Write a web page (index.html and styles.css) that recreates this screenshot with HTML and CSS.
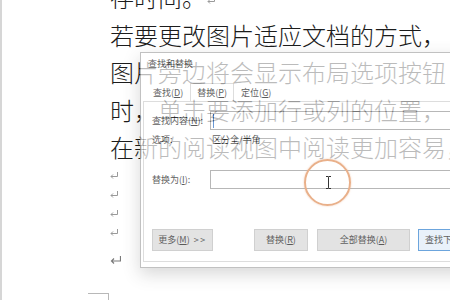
FILE: index.html
```html
<!DOCTYPE html>
<html lang="zh-CN">
<head>
<meta charset="utf-8">
<link rel="stylesheet" href="styles.css">
</head>
<body>
<div class="page">
  <div class="doc">
    <p class="line">存时间。<svg class="pm-inline" width="8" height="7" viewBox="0 0 8 7"><path d="M7.5 0 V4.5 H1 M3 2.5 L1 4.5 L3 6.5" fill="none" stroke="#9a9a9a"/></svg></p>
    <p class="line">若要更改图片适应文档的方式，</p>
    <p class="line">图片旁边将会显示布局选项按钮</p>
    <p class="line">时，单击要添加行或列的位置，</p>
    <p class="line">在新的阅读视图中阅读更加容易，</p>
    <div class="mark-s"><svg width="8" height="7" viewBox="0 0 8 7"><path d="M7.5 0 V4.5 H1 M3 2.5 L1 4.5 L3 6.5" fill="none" stroke="#9a9a9a"/></svg></div>
    <div class="mark-s"><svg width="8" height="7" viewBox="0 0 8 7"><path d="M7.5 0 V4.5 H1 M3 2.5 L1 4.5 L3 6.5" fill="none" stroke="#9a9a9a"/></svg></div>
    <div class="mark-s"><svg width="8" height="7" viewBox="0 0 8 7"><path d="M7.5 0 V4.5 H1 M3 2.5 L1 4.5 L3 6.5" fill="none" stroke="#9a9a9a"/></svg></div>
    <div class="mark-s"><svg width="8" height="7" viewBox="0 0 8 7"><path d="M7.5 0 V4.5 H1 M3 2.5 L1 4.5 L3 6.5" fill="none" stroke="#9a9a9a"/></svg></div>
    <div class="mark-l"><svg width="11" height="8" viewBox="0 0 11 8"><path d="M10.5 0 V5 H1.5 M4 2.5 L1.5 5 L4 7.5" fill="none" stroke="#7a7a7a" stroke-width="1.2"/></svg></div>
    <div class="corner"></div>
  </div>

  <div class="dialog">
    <div class="dlg-title">查找和替换</div>
    <div class="tabs">
      <span class="tab">查找(<u>D</u>)</span>
      <span class="tab active">替换(<u>P</u>)</span>
      <span class="tab">定位(<u>G</u>)</span>
    </div>
    <div class="panel">
      <div class="row">
        <span class="label">查找内容(<u>N</u>):</span>
        <div class="input"><span class="caret"></span></div>
      </div>
      <div class="row">
        <span class="label">选项:</span>
        <span class="val">区分全/半角</span>
      </div>
      <div class="row repl">
        <span class="label">替换为(<u>I</u>):</span>
        <div class="input"></div>
      </div>
      <div class="btns">
        <span class="btn more">更多(<u>M</u>) <span class="arrows">&gt;&gt;</span></span>
        <span class="btn replace">替换(<u>R</u>)</span>
        <span class="btn all">全部替换(<u>A</u>)</span>
        <span class="btn next">查找下一处(<u>F</u>)</span>
      </div>
    </div>
  </div>

  <div class="ring"></div>
  <svg class="ibeam" width="7" height="13" viewBox="0 0 7 13"><path d="M1 0.5 H3 Q3.5 0.5 3.5 1.5 V11.5 Q3.5 12.5 3 12.5 H1 M6 0.5 H4 Q3.5 0.5 3.5 1.5 M3.5 11.5 Q3.5 12.5 4 12.5 H6" fill="none" stroke="#333" stroke-width="1"/></svg>
</div>
</body>
</html>
```

FILE: styles.css
```css
html, body {
  margin: 0;
  padding: 0;
  background: #fff;
}

.page {
  position: relative;
  width: 450px;
  height: 300px;
  overflow: hidden;
  box-sizing: border-box;
  border-left: 2px solid #d6d6d6;
  background: #fff;
}

.doc {
  margin-top: -22px;
  padding-left: 108px;
  font-family: "Noto Sans CJK SC", "Noto Sans", sans-serif;
}

.line {
  margin: 0;
  height: 37.5px;
  line-height: 37.5px;
  font-size: 24px;
  font-weight: 300;
  color: #1c1c1c;
  white-space: nowrap;
}

.pm-inline {
  vertical-align: middle;
  margin-left: 1px;
}

.mark-s {
  height: 19px;
  display: flex;
  align-items: center;
}

.mark-l {
  height: 37px;
  display: flex;
  align-items: center;
}

.corner {
  margin-top: 14.5px;
  margin-left: -22px;
  width: 20px;
  height: 12px;
  border-top: 1px solid #b8b8b8;
  border-right: 1px solid #b8b8b8;
}

/* dialog */
.dialog {
  position: absolute;
  left: 138px;
  top: 52px;
  width: 330px;
  height: 216px;
  box-sizing: border-box;
  border: 1px solid #a8a8a8;
  background: #fff;
  box-shadow: 0 6px 16px rgba(0, 0, 0, 0.22);
  opacity: 0.7;
  padding-bottom: 5px;
  font-family: "Noto Sans CJK SC", "Noto Sans", sans-serif;
  font-size: 9px;
  color: #151515;
}

.dlg-title {
  height: 22px;
  line-height: 22px;
  padding-left: 7px;
}

.tabs {
  display: flex;
  padding-top: 8px;
  padding-left: 5px;
  height: 18px;
}

.tab {
  box-sizing: border-box;
  height: 18px;
  line-height: 18px;
  padding: 0 6px;
  border: 1px solid transparent;
  border-bottom: none;
}

.tab.active {
  border-color: #cfcfcf;
  background: #fff;
}

.panel {
  margin-left: 2px;
  border: 1px solid #cfcfcf;
  border-right: none;
  padding: 9px 0 10px 8px;
}

.row {
  display: flex;
  align-items: center;
  height: 19px;
}

.row.repl {
  margin-top: 21px;
}

.label {
  width: 58px;
  flex: none;
  white-space: nowrap;
}

.val {
  margin-left: 2px;
}

.input {
  flex: 1;
  height: 19px;
  box-sizing: border-box;
  border: 1px solid #9a9a9a;
  border-right: none;
  display: flex;
  align-items: center;
  padding-left: 2px;
}

.caret {
  width: 1px;
  height: 14px;
  background: #2d6fc4;
}

.btns {
  display: flex;
  margin-top: 40px;
  height: 22px;
}

.btn {
  box-sizing: border-box;
  height: 22px;
  line-height: 20px;
  text-align: center;
  white-space: nowrap;
  background: #d8d8d8;
  border: 1px solid #bdbdbd;
  flex: none;
}

.arrows {
  letter-spacing: 1.5px;
  margin-left: 2px;
}

.more {
  width: 61px;
}

.replace {
  width: 54px;
  margin-left: 41px;
}

.all {
  width: 93px;
  margin-left: 9px;
}

.next {
  width: 93px;
  margin-left: 8px;
  border-color: #2f7fd0;
  background: #e0ecf8;
  text-align: left;
  padding-left: 6px;
}

/* cursor highlight */
.ring {
  position: absolute;
  left: 302px;
  top: 159px;
  width: 47px;
  height: 47px;
  box-sizing: border-box;
  border: 2.5px solid #e9b08a;
  border-radius: 50%;
  box-shadow: 0 0 2px rgba(233, 170, 130, 0.6);
}

.ibeam {
  position: absolute;
  left: 323px;
  top: 176px;
}
```
